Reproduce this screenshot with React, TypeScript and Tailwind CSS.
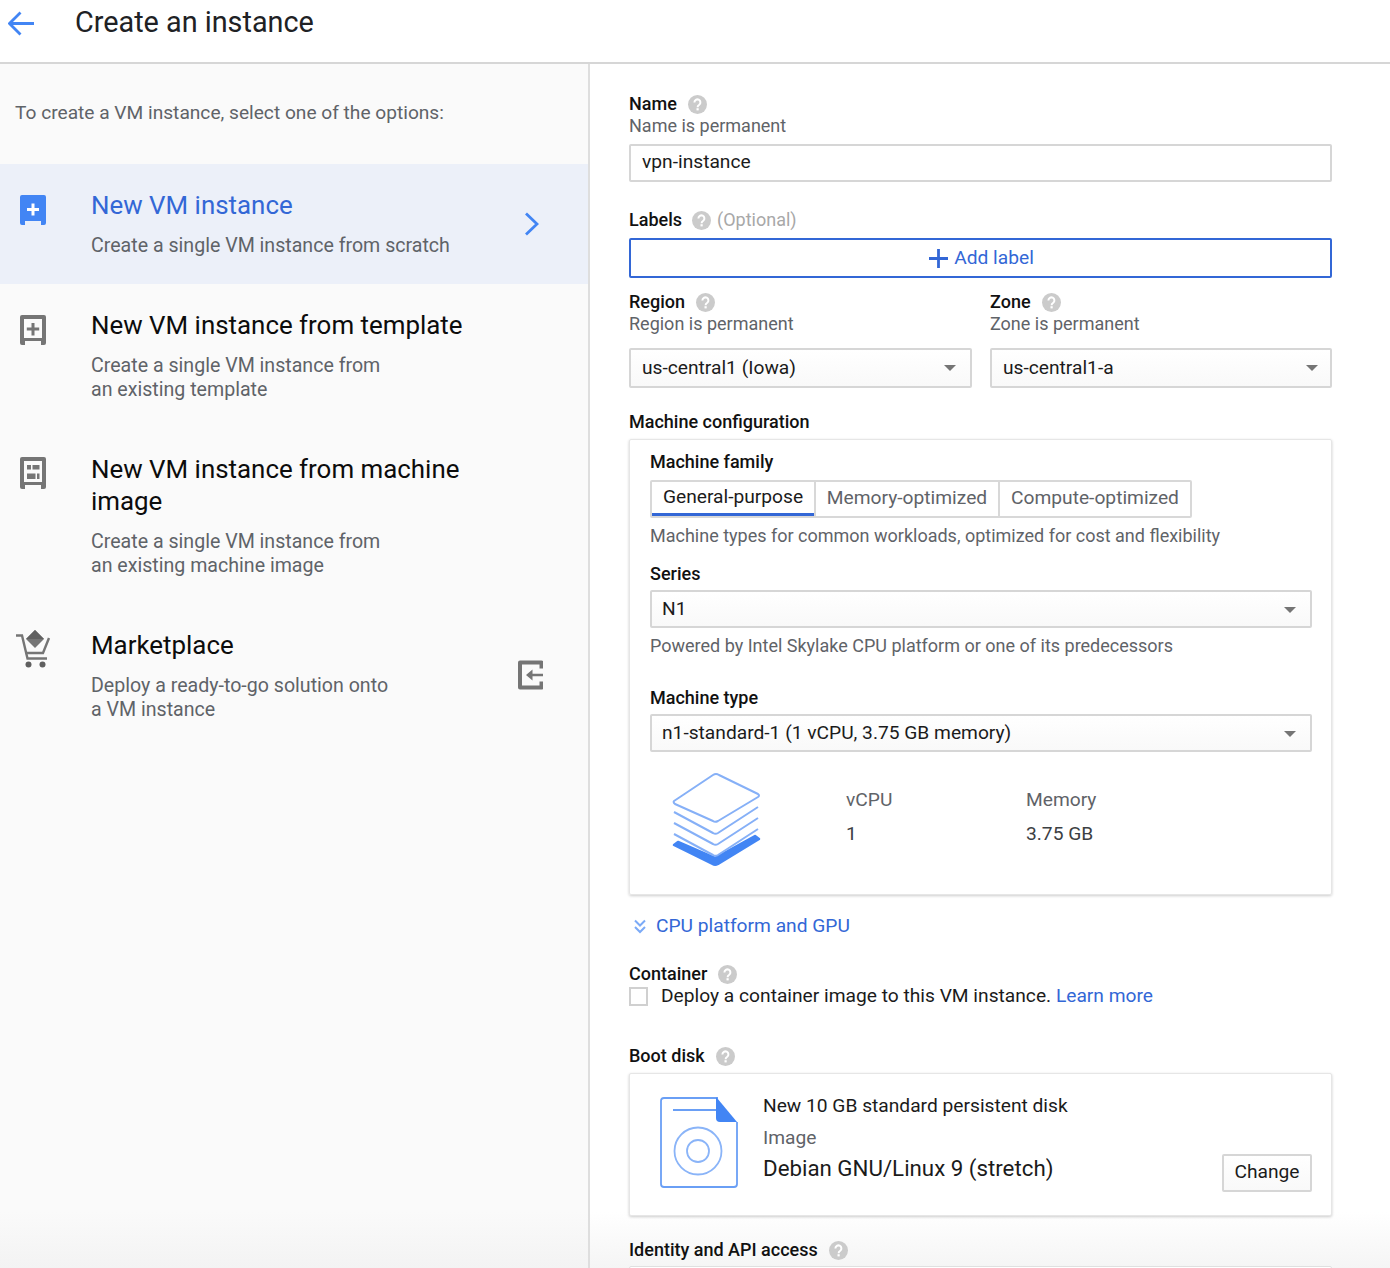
import type { ReactNode } from 'react'

const BLUE = '#4285f4'

function Help({ className = '' }: { className?: string }) {
  return (
    <svg width="19" height="19" viewBox="0 0 19 19" className={className}>
      <circle cx="9.5" cy="9.5" r="9.5" fill="#cbcbcb" />
      <path d="M6.4 7.4a3 3 0 1 1 4.8 2.4c-1 .7-1.6 1.200-1.600 2.400" fill="none" stroke="#fff" strokeWidth="2" />
      <rect x="8.500" y="13.200" width="2.200" height="2.200" fill="#fff" />
    </svg>
  )
}

function Caret() {
  return (
    <svg width="12" height="6" viewBox="0 0 12 6" className="shrink-0">
      <path d="M0 0h12L6 6z" fill="#757575" />
    </svg>
  )
}

const shell = (h: number) =>
  `M2 0H24a2 2 0 0 1 2 2V${h - 2}a2 2 0 0 1-2 2H21V${h - 4}H5v4H2a2 2 0 0 1-2-2V2a2 2 0 0 1 2-2z`

function VmFilled() {
  return (
    <svg width="26" height="30" viewBox="0 0 26 30">
      <path d={shell(30)} fill={BLUE} />
      <path d="M13 8.500v12M7 14.500h12" stroke="#fff" strokeWidth="3" />
    </svg>
  )
}

function VmTemplate() {
  return (
    <svg width="26" height="30" viewBox="0 0 26 30">
      <path d={`${shell(30)}M4 4V23H22V4z`} fill="#757575" fillRule="evenodd" />
      <path d="M13 8v12.500M6.800 14h12.400" stroke="#757575" strokeWidth="3" />
    </svg>
  )
}

function VmImage() {
  return (
    <svg width="26" height="32" viewBox="0 0 26 32">
      <path d={`${shell(32)}M4 4V25H22V4z`} fill="#757575" fillRule="evenodd" />
      <path d="M7 8h4v4.500H7zM12.500 8h7v4.500h-7zM7 16.500h8.500V22H7zM17 16.500h2.500V22H17z" fill="#757575" />
    </svg>
  )
}

function Cart() {
  return (
    <svg width="36" height="38" viewBox="0 0 36 38">
      <path d="M20 0l9 9-9 9-9-9z" fill="#757575" />
      <path d="M20 0l9 9H11z" fill="#616161" />
      <path d="M1 5.500h6l5.500 23H32" fill="none" stroke="#757575" strokeWidth="2.400" />
      <path d="M34 8l-6 15H10.500" fill="none" stroke="#757575" strokeWidth="2.400" />
      <circle cx="13.500" cy="34.500" r="3" fill="#5f5f5f" />
      <circle cx="27.500" cy="34.500" r="3" fill="#5f5f5f" />
    </svg>
  )
}

function ExitIcon() {
  return (
    <svg width="26" height="30" viewBox="0 0 26 30">
      <path d="M24.500 8.500V2.500H3V27.500H24.500V21.500" fill="none" stroke="#757575" strokeWidth="4" strokeLinejoin="round" />
      <path d="M26 13.700H15.500V9.500L9 15l6.500 5.500v-4.200H26z" fill="#757575" />
    </svg>
  )
}

function Stack() {
  const layer = 'M2 29L41 50q2.500 1.500 5 0L86 24'
  return (
    <svg width="90" height="98" viewBox="0 0 90 98">
      <path d="M2 73l4-3 37 16 40-22 4 3-41 25q-3 1.500-5.500 0z" fill={BLUE} stroke={BLUE} strokeWidth="2.500" strokeLinejoin="round" />
      <g fill="none" stroke="#86b0f7" strokeWidth="2" strokeLinejoin="round">
        <path d={layer} transform="translate(0 11)" />
        <path d={layer} transform="translate(0 22)" />
        <path d={layer} transform="translate(0 33)" />
        <path d="M2 29L41 3q3-2 6 0L86 22q2 1.500 0 3L46 49q-3 1.500-5 0L3 32q-2-1.500-1-3z" fill="#fff" />
      </g>
    </svg>
  )
}

function DiskIcon() {
  return (
    <svg width="78" height="91" viewBox="0 0 78 91">
      <path d="M58 1H4a3 3 0 0 0-3 3v83a3 3 0 0 0 3 3h70a3 3 0 0 0 3-3V25" fill="none" stroke="#6a9ff5" strokeWidth="1.800" />
      <path d="M13 13h43" stroke="#6a9ff5" strokeWidth="1.800" />
      <path d="M56 1q0-1 1 0l20 24H60a4 4 0 0 1-4-4z" fill={BLUE} />
      <circle cx="38" cy="54" r="23.500" fill="none" stroke="#8ab4f8" strokeWidth="1.800" />
      <circle cx="38" cy="54" r="11" fill="none" stroke="#8ab4f8" strokeWidth="1.800" />
    </svg>
  )
}

function FieldLabel({ children, help = true, className = '' }: { children: ReactNode; help?: boolean; className?: string }) {
  return (
    <div className={`flex h-6 items-center text-[18px] font-medium leading-6 text-[#111] ${className}`}>
      <span>{children}</span>
      {help && <Help className="ml-[11px]" />}
    </div>
  )
}

function Hint({ children, className = '' }: { children: ReactNode; className?: string }) {
  return <div className={`h-5 text-[18px] leading-5 text-[#5f6368] ${className}`}>{children}</div>
}

function SelectBox({ value, className = '' }: { value: string; className?: string }) {
  return (
    <div className={`flex items-center justify-between rounded-[2px] border-2 border-[#d6d6d6] bg-gradient-to-b from-white to-[#f9f9f9] text-[19.200px] text-[#1b1b1b] ${className}`}>
      <span>{value}</span>
      <Caret />
    </div>
  )
}

function Option({
  icon,
  title,
  lines,
  trailing,
  active = false,
  iconClass = 'pl-[20px] pt-[6px]',
}: {
  icon: ReactNode
  title: string[]
  lines: string[]
  trailing?: ReactNode
  active?: boolean
  iconClass?: string
}) {
  return (
    <div className={`flex items-center pr-[44px] ${active ? 'bg-[#ecf0f9]' : ''}`}>
      <div className="flex flex-1 pb-[26px] pt-[25px]">
        <div className={`w-[91px] shrink-0 ${iconClass}`}>{icon}</div>
        <div>
          <div className={`text-[25.900px] leading-8 ${active ? 'text-[#3367d6]' : 'text-[#0c0c0c]'}`}>
            {title.map((t) => (
              <div key={t}>{t}</div>
            ))}
          </div>
          <div className="mt-[13px] text-[19.600px] leading-6 text-[#5f6368]">
            {lines.map((l) => (
              <div key={l}>{l}</div>
            ))}
          </div>
        </div>
      </div>
      {trailing}
    </div>
  )
}

export default function App() {
  return (
    <div className="h-[1268px] w-[1390px] overflow-hidden bg-white font-['Roboto',sans-serif]">
      {/* Header */}
      <header className="flex h-[64px] border-b-2 border-[#d6d6d6]">
        <div className="w-[75px] pl-2 pt-[11px]">
          <svg width="27" height="25" viewBox="0 0 27 25">
            <path d="M26 12.500H2M12.500 1.500L1.500 12.500l11 11" fill="none" stroke={BLUE} strokeWidth="2.800" />
          </svg>
        </div>
        <h1 className="pt-[4px] text-[28.800px] font-normal leading-9 text-[#202124]">Create an instance</h1>
      </header>

      <div className="flex h-[1204px] bg-[linear-gradient(to_bottom,#fff_calc(100%-56px),#f5f5f5)]">
        {/* Options */}
        <aside className="w-[590px] shrink-0 border-r-2 border-[#dedede] bg-[linear-gradient(to_bottom,#fafafa_calc(100%-56px),#f3f3f3)]">
          <p className="h-[100px] pl-[15px] pt-[37px] text-[19.150px] leading-6 text-[#5f6368]">
            To create a VM instance, select one of the options:
          </p>
          <Option
            active
            icon={<VmFilled />}
            title={['New VM instance']}
            lines={['Create a single VM instance from scratch']}
            trailing={
              <svg width="15" height="24" viewBox="0 0 15 24" className="mr-[5px] shrink-0">
                <path d="M2 1.500L13 12 2 22.500" fill="none" stroke={BLUE} strokeWidth="2.800" />
              </svg>
            }
          />
          <Option
            icon={<VmTemplate />}
            title={['New VM instance from template']}
            lines={['Create a single VM instance from', 'an existing template']}
          />
          <Option
            icon={<VmImage />}
            iconClass="pl-[20px] pt-[4px]"
            title={['New VM instance from machine', 'image']}
            lines={['Create a single VM instance from', 'an existing machine image']}
          />
          <Option
            icon={<Cart />}
            iconClass="pl-[15px] pt-[1px]"
            title={['Marketplace']}
            lines={['Deploy a ready-to-go solution onto', 'a VM instance']}
            trailing={
              <div className="-mt-[2px] mr-[1px] shrink-0">
                <ExitIcon />
              </div>
            }
          />
        </aside>

        {/* Form */}
        <main className="ml-[39px] w-[703px] shrink-0 pt-[28px]">
          <FieldLabel>Name</FieldLabel>
          <Hint>Name is permanent</Hint>
          <div className="mt-2 flex h-[38px] items-center rounded-[2px] border-2 border-[#d6d6d6] pb-[2px] pl-[11px] text-[19.200px] text-[#1b1b1b]">
            vpn-instance
          </div>

          <div className="mt-[26px] flex h-6 items-center">
            <FieldLabel help={false}>Labels</FieldLabel>
            <Help className="ml-[10px]" />
            <span className="-mt-[2px] ml-[6px] text-[18px] text-[#a8a8a8]">(Optional)</span>
          </div>
          <button className="mt-[6px] flex h-[40px] w-full items-center justify-center rounded-[2px] border-2 border-[#3367d6] pl-[2px] text-[19.200px] text-[#3367d6]">
            <svg width="19" height="19" viewBox="0 0 19 19" className="mr-[6px]">
              <path d="M9.500 0v19M0 9.500h19" stroke="#3367d6" strokeWidth="2.800" />
            </svg>
            Add label
          </button>

          <div className="mt-3 grid grid-cols-[343px_342px] gap-x-[18px]">
            <div>
              <FieldLabel>Region</FieldLabel>
              <Hint>Region is permanent</Hint>
              <SelectBox value="us-central1 (Iowa)" className="mt-[14px] h-[40px] pl-[11px] pr-[14px]" />
            </div>
            <div>
              <FieldLabel>Zone</FieldLabel>
              <Hint>Zone is permanent</Hint>
              <SelectBox value="us-central1-a" className="mt-[14px] h-[40px] pl-[11px] pr-[12px]" />
            </div>
          </div>

          <FieldLabel help={false} className="mt-[22px]">
            Machine configuration
          </FieldLabel>
          <section className="mt-[5px] h-[456px] rounded-[2px] border border-[#e6e6e6] pl-[20px] pr-[19px] pt-[10px] shadow-[0_1px_3px_rgba(0,0,0,0.2)]">
            <FieldLabel help={false}>Machine family</FieldLabel>
            <div className="mt-[6px] flex h-[38px] w-fit rounded-[2px] border-2 border-[#d8d8d8] text-[19.200px]">
              <div className="flex w-[162px] items-center justify-center border-b-[3px] border-[#3367d6] text-[#1b1b1b]">
                General-purpose
              </div>
              <div className="flex w-[184px] items-center justify-center border-l-2 border-[#d8d8d8] pb-[2px] text-[#5f6368]">
                Memory-optimized
              </div>
              <div className="flex w-[192px] items-center justify-center border-l-2 border-[#d8d8d8] pb-[2px] text-[#5f6368]">
                Compute-optimized
              </div>
            </div>
            <Hint className="mt-2">Machine types for common workloads, optimized for cost and flexibility</Hint>

            <FieldLabel help={false} className="mt-4">
              Series
            </FieldLabel>
            <SelectBox value="N1" className="mt-1 h-[38px] pl-[10px] pr-[14px] pt-[1px]" />
            <Hint className="mt-2">Powered by Intel Skylake CPU platform or one of its predecessors</Hint>

            <FieldLabel help={false} className="mt-[30px]">
              Machine type
            </FieldLabel>
            <SelectBox
              value="n1-standard-1 (1 vCPU, 3.75 GB memory)"
              className="mt-1 h-[38px] pl-[10px] pr-[14px] pt-[1px]"
            />

            <div className="mt-5 flex">
              <div className="w-[196px] pl-[22px]">
                <Stack />
              </div>
              <div className="w-[180px] pt-[18px] text-[19.200px] leading-5">
                <div className="text-[#5f6368]">vCPU</div>
                <div className="mt-[14px] text-[#3c4043]">1</div>
              </div>
              <div className="pt-[18px] text-[19.200px] leading-5">
                <div className="text-[#5f6368]">Memory</div>
                <div className="mt-[14px] text-[#3c4043]">3.75 GB</div>
              </div>
            </div>
          </section>

          <div className="mt-[21px] flex h-5 items-center text-[19.200px] text-[#3367d6]">
            <svg width="12" height="15" viewBox="0 0 12 15" className="ml-[5px] mr-[10px]">
              <path d="M1 1.500l5 5 5-5M1 8l5 5 5-5" fill="none" stroke="#7baaf7" strokeWidth="2" />
            </svg>
            CPU platform and GPU
          </div>

          <FieldLabel className="mt-[26px]">Container</FieldLabel>
          <div className="flex h-5 items-center text-[19.200px] text-[#1b1b1b]">
            <span className="h-[19px] w-[19px] shrink-0 border-2 border-[#d0d0d0]" />
            <span className="ml-[13px]">
              Deploy a container image to this VM instance. <span className="text-[#3367d6]">Learn more</span>
            </span>
          </div>

          <FieldLabel className="mt-[38px]">Boot disk</FieldLabel>
          <section className="mt-[5px] flex h-[143px] rounded-[2px] border border-[#e6e6e6] bg-white pl-[30px] pr-[19px] pt-[23px] shadow-[0_1px_3px_rgba(0,0,0,0.2)]">
            <DiskIcon />
            <div className="-mt-[1px] ml-[25px] flex-1">
              <div className="text-[19.200px] leading-5 text-[#1b1b1b]">New 10 GB standard persistent disk</div>
              <div className="mt-3 text-[19.200px] leading-5 text-[#5f6368]">Image</div>
              <div className="mt-[6px] text-[22.300px] leading-7 text-[#1b1b1b]">Debian GNU/Linux 9 (stretch)</div>
            </div>
            <button className="mb-[23px] h-[38px] w-[90px] self-end rounded-[2px] border-2 border-[#d6d6d6] bg-gradient-to-b from-white to-[#f9f9f9] pb-[2px] text-[19.200px] text-[#1b1b1b]">
              Change
            </button>
          </section>

          <FieldLabel className="mt-[22px]">Identity and API access</FieldLabel>
          <div className="mt-1 h-6 rounded-[2px] border border-[#e0e0e0] bg-white" />
        </main>
      </div>
    </div>
  )
}
